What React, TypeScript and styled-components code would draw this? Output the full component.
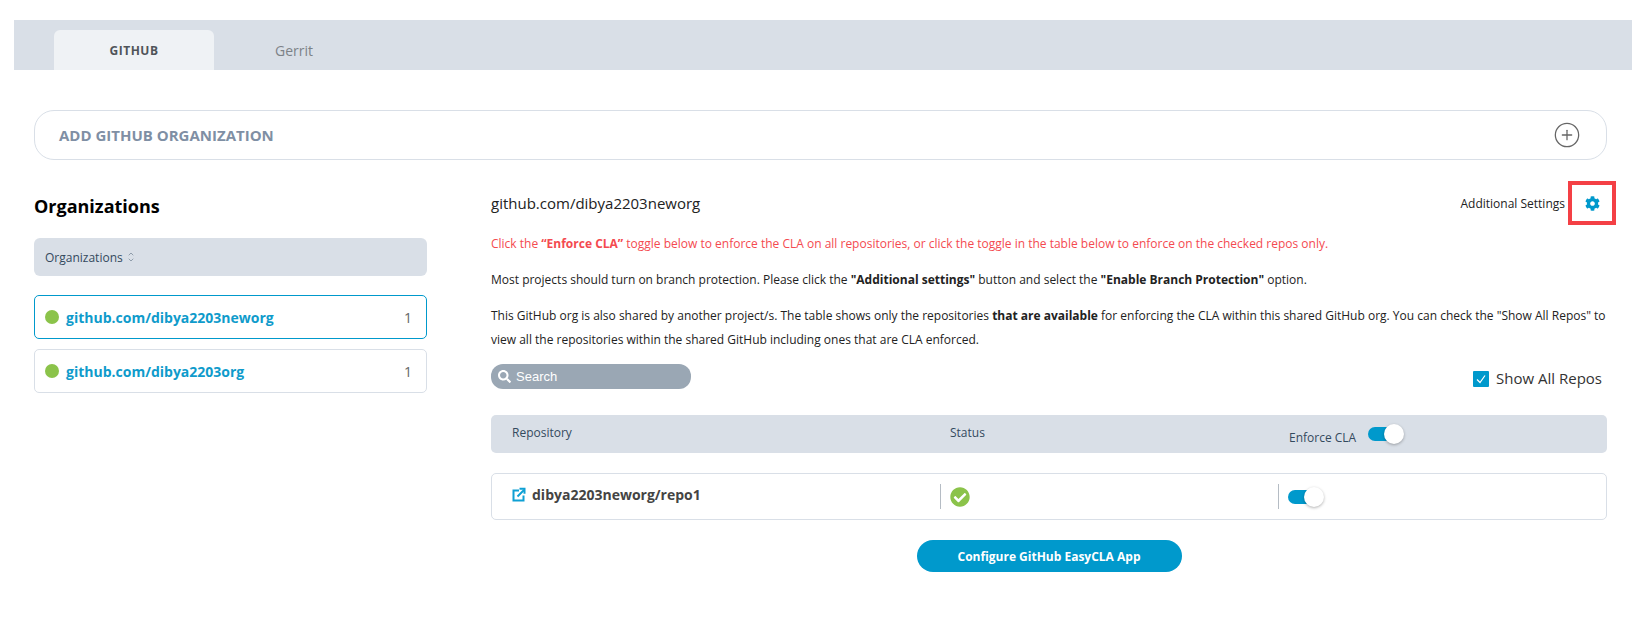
import * as React from 'react';
import styled, { createGlobalStyle } from 'styled-components';
import { ChevronDown, ChevronUp, CirclePlus } from 'lucide-react';
import { FaCheckCircle, FaCog, FaSearch } from 'react-icons/fa';

const GlobalStyle = createGlobalStyle`
  html, body {
    margin: 0;
    padding: 0;
    background: #fff;
    font-family: "Open Sans", "Noto Sans", sans-serif;
    color: #1c2733;
  }
`;

const Page = styled.div`
  width: 1632px;
  height: 637px;
  padding-top: 20px;
  box-sizing: border-box;
  overflow: hidden;
`;

const TabBar = styled.div`
  margin-left: 14px;
  height: 50px;
  background: #d9dfe7;
  display: flex;
  align-items: flex-end;
  padding-left: 40px;
`;

const Tab = styled.div<{ $active?: boolean }>`
  width: 160px;
  height: 40px;
  display: flex;
  align-items: center;
  justify-content: center;
  border-radius: 6px 6px 0 0;
  font-size: ${(p) => (p.$active ? '12px' : '14px')};
  font-weight: ${(p) => (p.$active ? 700 : 400)};
  letter-spacing: ${(p) => (p.$active ? '0.5px' : '0')};
  color: ${(p) => (p.$active ? '#4f5459' : '#7d8287')};
  background: ${(p) => (p.$active ? '#eff2f5' : 'transparent')};
`;

const Content = styled.div`
  padding: 40px 25px 0 34px;
`;

const AddBar = styled.div`
  height: 50px;
  box-sizing: border-box;
  border: 1px solid #d9dfe7;
  border-radius: 20px;
  display: flex;
  align-items: center;
  justify-content: space-between;
  padding: 0 25px 0 24px;
  font-size: 15px;
  font-weight: 700;
  color: #7f8fa4;
`;

const Columns = styled.div`
  display: grid;
  grid-template-columns: 393px 1116px;
  column-gap: 64px;
  margin-top: 20px;
`;

const Sidebar = styled.div`
  display: flex;
  flex-direction: column;
`;

const Heading = styled.h2`
  margin: 0;
  height: 58px;
  padding-top: 15px;
  box-sizing: border-box;
  font-size: 18px;
  line-height: 23px;
  font-weight: 700;
  color: #000;
`;

const SortHeader = styled.div`
  height: 38px;
  background: #d9dfe7;
  border-radius: 6px;
  display: flex;
  align-items: center;
  padding-left: 11px;
  gap: 4px;
  font-size: 12px;
  color: #344a5e;
`;

const SortIcon = styled.span`
  display: inline-flex;
  flex-direction: column;
  color: #6b7b8c;
  svg {
    display: block;
    margin: -1px 0;
  }
`;

const OrgList = styled.div`
  margin-top: 19px;
  display: flex;
  flex-direction: column;
  gap: 10px;
`;

const OrgRow = styled.div<{ $selected?: boolean }>`
  height: 44px;
  box-sizing: border-box;
  border: 1px solid ${(p) => (p.$selected ? '#0099cc' : '#d9dfe7')};
  border-radius: 5px;
  display: flex;
  align-items: center;
  padding: 0 14px 0 10px;
  font-size: 14px;
  font-weight: 700;
  color: #0f9bcb;
`;

const Dot = styled.span`
  width: 14px;
  height: 14px;
  border-radius: 50%;
  background: #8bc34a;
  margin-right: 7px;
`;

const Count = styled.span`
  margin-left: auto;
  font-size: 14px;
  font-weight: 400;
  color: #666;
`;

const Main = styled.div`
  display: flex;
  flex-direction: column;
`;

const TitleRow = styled.div`
  position: relative;
  display: flex;
  align-items: center;
  justify-content: space-between;
  height: 46px;
  padding-right: 7px;
`;

const OrgTitle = styled.span`
  font-size: 15px;
  color: #222;
`;

const SettingsGroup = styled.div`
  display: flex;
  align-items: center;
  gap: 20px;
  font-size: 12px;
  color: #222;
  svg {
    color: #0099cc;
  }
`;

const Highlight = styled.div`
  position: absolute;
  right: -9px;
  top: 1px;
  width: 48px;
  height: 44px;
  box-sizing: border-box;
  border: 4px solid #f44045;
`;

const Note = styled.p<{ $alert?: boolean }>`
  margin: 0 0 12px;
  font-size: 12px;
  line-height: 24px;
  color: ${(p) => (p.$alert ? '#f44a50' : '#222')};
`;

const Notes = styled.div`
  margin-top: 6px;
`;

const SearchRow = styled.div`
  display: flex;
  align-items: flex-start;
  justify-content: space-between;
  height: 51px;
`;

const SearchBox = styled.div`
  width: 200px;
  height: 25px;
  border-radius: 12px;
  background: #9aa7b4;
  display: flex;
  align-items: center;
  padding-left: 7px;
  gap: 5px;
  box-sizing: border-box;
  font-family: "Liberation Sans", Arial, sans-serif;
  font-size: 13px;
  color: #fff;
`;

const ShowAll = styled.label`
  display: flex;
  align-items: center;
  gap: 7px;
  margin-top: 5px;
  padding-right: 5px;
  font-size: 15px;
  line-height: 19px;
  color: #333;
`;

const CheckBox = styled.span`
  width: 16px;
  height: 16px;
  background: #0099cc;
  border-radius: 1px;
  display: flex;
  align-items: center;
  justify-content: center;
`;

const TableHead = styled.div`
  display: grid;
  grid-template-columns: 438px 339px 1fr;
  height: 38px;
  background: #d9dfe7;
  border-radius: 5px;
  padding-left: 21px;
  box-sizing: border-box;
  font-size: 12px;
  color: #344a5e;
  align-items: center;
`;

const HeadCell = styled.div`
  padding-bottom: 4px;
`;

const EnforceCell = styled.div`
  display: flex;
  align-items: center;
  gap: 12px;
  span {
    margin-top: 6px;
  }
`;

const Toggle = styled.div`
  position: relative;
  width: 26px;
  height: 14px;
  border-radius: 7px;
  background: #0099cc;
  margin-right: 10px;
  &::after {
    content: '';
    position: absolute;
    right: -10px;
    top: -3px;
    width: 20px;
    height: 20px;
    border-radius: 50%;
    background: #fff;
    box-shadow: 0 1px 3px rgba(0, 0, 0, 0.3);
  }
`;

const RepoRow = styled.div`
  margin-top: 20px;
  height: 47px;
  border: 1px solid #d9dfe7;
  border-radius: 5px;
  box-sizing: border-box;
  display: grid;
  grid-template-columns: 448px 338px 1fr;
  align-items: center;
`;

const RepoName = styled.div`
  display: flex;
  align-items: center;
  gap: 6px;
  padding: 0 0 4px 20px;
  font-size: 14px;
  font-weight: 700;
  color: #444;
`;

const RepoCell = styled.div`
  height: 25px;
  border-left: 1px solid #b5bcc4;
  padding-left: 9px;
  display: flex;
  align-items: center;
`;

const Actions = styled.div`
  display: flex;
  justify-content: center;
  margin-top: 20px;
`;

const PrimaryButton = styled.button`
  width: 265px;
  height: 32px;
  border: 0;
  border-radius: 16px;
  background: #0099cc;
  color: #fff;
  font-family: inherit;
  font-size: 12px;
  font-weight: 700;
`;

const orgs = [
  { name: 'github.com/dibya2203neworg', count: 1, selected: true },
  { name: 'github.com/dibya2203org', count: 1, selected: false },
];

// box with an arrow leaving its top right corner, heavier than the lucide one
const RepoLinkIcon = () => (
  <svg width="14" height="15" viewBox="0 0 14 15" fill="none" stroke="#0fa0d4" strokeWidth="2">
    <path d="M7 3.5H1.5v10h10V8.5" />
    <path d="M5.5 9.5L12 3" />
    <path d="M7.5 1.8h5v5" />
  </svg>
);

export default function App() {
  return (
    <Page>
      <GlobalStyle />
      <TabBar>
        <Tab $active>GITHUB</Tab>
        <Tab>Gerrit</Tab>
      </TabBar>
      <Content>
        <AddBar>
          ADD GITHUB ORGANIZATION
          <CirclePlus size={28} strokeWidth={1.1} color="#666" />
        </AddBar>
        <Columns>
          <Sidebar>
            <Heading>Organizations</Heading>
            <SortHeader>
              Organizations
              <SortIcon>
                <ChevronUp size={8} strokeWidth={2} />
                <ChevronDown size={8} strokeWidth={2} />
              </SortIcon>
            </SortHeader>
            <OrgList>
              {orgs.map((org) => (
                <OrgRow key={org.name} $selected={org.selected}>
                  <Dot />
                  {org.name}
                  <Count>{org.count}</Count>
                </OrgRow>
              ))}
            </OrgList>
          </Sidebar>
          <Main>
            <TitleRow>
              <OrgTitle>github.com/dibya2203neworg</OrgTitle>
              <SettingsGroup>
                Additional Settings
                <FaCog size={15} />
              </SettingsGroup>
              <Highlight />
            </TitleRow>
            <Notes>
              <Note $alert>
                Click the <b>“Enforce CLA”</b> toggle below to enforce the CLA on all repositories, or click the
                toggle in the table below to enforce on the checked repos only.
              </Note>
              <Note>
                Most projects should turn on branch protection. Please click the <b>"Additional settings"</b> button
                and select the <b>"Enable Branch Protection"</b> option.
              </Note>
              <Note>
                This GitHub org is also shared by another project/s. The table shows only the repositories{' '}
                <b>that are available</b> for enforcing the CLA within this shared GitHub org. You can check the "Show
                All Repos" to view all the repositories within the shared GitHub including ones that are CLA enforced.
              </Note>
            </Notes>
            <SearchRow>
              <SearchBox>
                <FaSearch size={13} />
                Search
              </SearchBox>
              <ShowAll>
                <CheckBox>
                  <svg width="12" height="12" viewBox="0 0 12 12" fill="none" stroke="#fff" strokeWidth="1.2">
                    <path d="M2 6.5l3 3 5-7" />
                  </svg>
                </CheckBox>
                Show All Repos
              </ShowAll>
            </SearchRow>
            <TableHead>
              <HeadCell>Repository</HeadCell>
              <HeadCell>Status</HeadCell>
              <EnforceCell>
                <span>Enforce CLA</span>
                <Toggle />
              </EnforceCell>
            </TableHead>
            <RepoRow>
              <RepoName>
                <RepoLinkIcon />
                dibya2203neworg/repo1
              </RepoName>
              <RepoCell>
                <FaCheckCircle size={20} color="#8bc34a" />
              </RepoCell>
              <RepoCell>
                <Toggle />
              </RepoCell>
            </RepoRow>
            <Actions>
              <PrimaryButton>Configure GitHub EasyCLA App</PrimaryButton>
            </Actions>
          </Main>
        </Columns>
      </Content>
    </Page>
  );
}
